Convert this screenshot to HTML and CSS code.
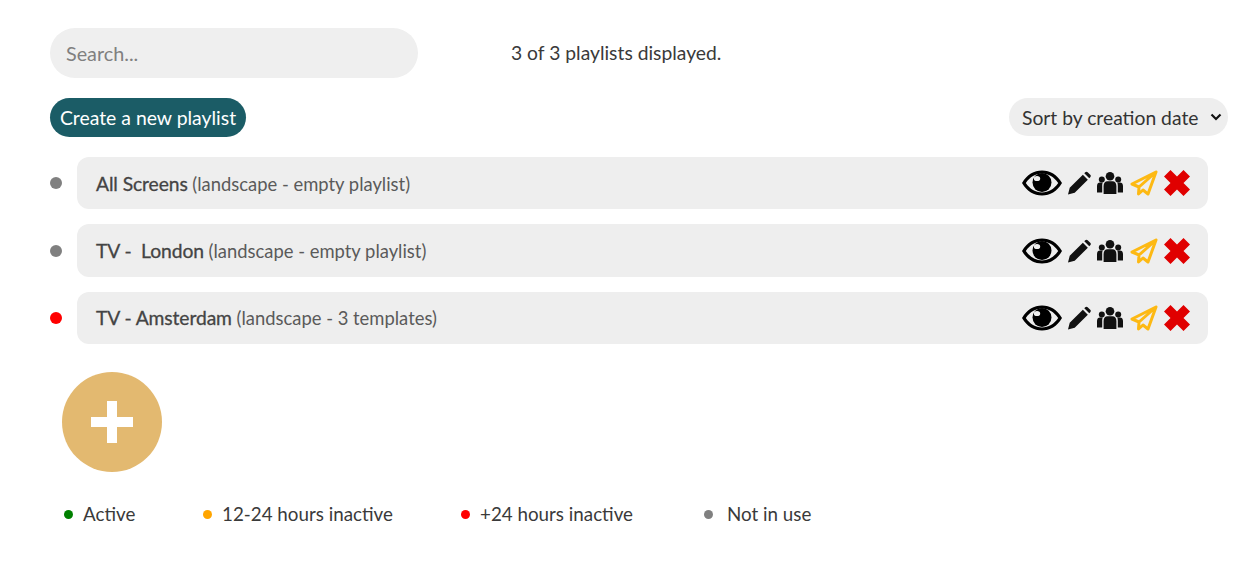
FILE: index.html
```html
<!DOCTYPE html>
<html lang="en">
<head>
<meta charset="utf-8">
<title>Playlists</title>
<link rel="stylesheet" href="styles.css">
</head>
<body>
<svg class="defs" width="0" height="0" aria-hidden="true">
  <symbol id="i-eye" viewBox="0 0 40 26">
    <path fill-rule="evenodd" d="M0 13C5 4.500 12 .5 20 .5S35 4.500 40 13c-5 8.500-12 12.500-20 12.500S5 21.500 0 13zm3.800 0C8 19 13.500 22.500 20 22.500S32 19 36.200 13C32 7 26.500 3.500 20 3.500S8 7 3.800 13z"/>
    <circle cx="20" cy="12.500" r="9.500"/>
    <ellipse cx="15" cy="8.500" rx="3.200" ry="2.600" fill="#eee"/>
  </symbol>
  <symbol id="i-pencil" viewBox="0 0 24 24"><path d="M0 24l1.800-7L15.500 3.300l5.200 5.200L7 22.200zM17 1.800l1-1c.8-.8 1.800-.8 2.500 0l2.700 2.700c.8.700.8 1.700 0 2.500l-1 1z"/></symbol>
  <symbol id="i-group" viewBox="0 0 26 22"><circle cx="13" cy="4.300" r="4.300"/><circle cx="4.800" cy="7.500" r="3"/><circle cx="21.200" cy="7.500" r="3"/><path d="M6.600 22V14c0-3 1.500-4.800 3.900-4.800h5c2.400 0 3.900 1.800 3.900 4.800v8zM0 20.500V14c0-2.500 1.300-3.500 3-3.500h2.800C5.300 11.500 5.200 12.500 5.200 14v6.500zM26 20.500V14c0-2.500-1.300-3.500-3-3.500h-2.800c.5 1 .6 2 .6 3.500v6.500z"/></symbol>
  <symbol id="i-plane" viewBox="0 0 28 26"><path fill="none" stroke="currentColor" stroke-width="3" stroke-linejoin="round" d="M26 2L2 14l7 3-.5 7 4.500-4 5 4zM26 2L9 17"/></symbol>
  <symbol id="i-x" viewBox="0 0 26 26"><path d="M6.500 0L13 6.500 19.500 0 26 6.500 19.500 13 26 19.500 19.500 26 13 19.500 6.500 26 0 19.500 6.500 13 0 6.500z"/></symbol>
</svg>
<main class="page">
  <div class="top">
    <input class="search" type="text" placeholder="Search...">
    <p class="count">3 of 3 playlists displayed.</p>
  </div>
  <div class="bar">
    <button class="create" type="button">Create a new playlist</button>
    <select class="sort"><option>Sort by creation date</option></select>
  </div>
  <ul class="list">
    <li class="item">
      <span class="dot dot-grey"></span>
      <div class="card">
        <p class="label"><b class="name">All Screens</b> (landscape - empty playlist)</p>
        <div class="icons">
          <svg class="eye"><use href="#i-eye"/></svg>
          <svg class="pencil"><use href="#i-pencil"/></svg>
          <svg class="group"><use href="#i-group"/></svg>
          <svg class="plane"><use href="#i-plane"/></svg>
          <svg class="x"><use href="#i-x"/></svg>
        </div>
      </div>
    </li>
    <li class="item">
      <span class="dot dot-grey"></span>
      <div class="card">
        <p class="label"><b class="name">TV -&nbsp; London</b> (landscape - empty playlist)</p>
        <div class="icons">
          <svg class="eye"><use href="#i-eye"/></svg>
          <svg class="pencil"><use href="#i-pencil"/></svg>
          <svg class="group"><use href="#i-group"/></svg>
          <svg class="plane"><use href="#i-plane"/></svg>
          <svg class="x"><use href="#i-x"/></svg>
        </div>
      </div>
    </li>
    <li class="item">
      <span class="dot dot-red"></span>
      <div class="card">
        <p class="label"><b class="name">TV - Amsterdam</b> (landscape - 3 templates)</p>
        <div class="icons">
          <svg class="eye"><use href="#i-eye"/></svg>
          <svg class="pencil"><use href="#i-pencil"/></svg>
          <svg class="group"><use href="#i-group"/></svg>
          <svg class="plane"><use href="#i-plane"/></svg>
          <svg class="x"><use href="#i-x"/></svg>
        </div>
      </div>
    </li>
  </ul>
  <button class="add" type="button" aria-label="Add"><span class="plus"></span></button>
  <ul class="legend">
    <li class="key"><span class="mini mini-green"></span>Active</li>
    <li class="key"><span class="mini mini-orange"></span>12-24 hours inactive</li>
    <li class="key"><span class="mini mini-red"></span>+24 hours inactive</li>
    <li class="key"><span class="mini mini-grey"></span>Not in use</li>
  </ul>
</main>
</body>
</html>
```
FILE: styles.css
```css
* { box-sizing: border-box; }
html, body { margin: 0; padding: 0; }
body {
  background: #fff;
  color: #333;
  font-family: "Lato", "Open Sans", sans-serif;
  font-size: 19px;
}
.defs { display: block; height: 0; }
.page { padding: 28px 7px 0 50px; }
.top { display: flex; align-items: center; height: 50px; }
.search {
  width: 368px;
  height: 50px;
  border: 0;
  border-radius: 25px;
  background: #efefef;
  padding: 0 16px;
  font: inherit;
  font-size: 19.800px;
  color: #333;
}
.search::placeholder { color: #808080; opacity: 1; }
.count { margin: 0 0 2px 93px; font-size: 19.300px; color: #3a3a3a; }
.bar { display: flex; justify-content: space-between; align-items: flex-start; margin-top: 20px; }
.create {
  width: 196px;
  height: 39px;
  border: 0;
  border-radius: 20px;
  background: #1b5c66;
  color: #fff;
  font: inherit;
  font-size: 19.400px;
  padding: 0;
}
.sort {
  appearance: none;
  width: 219px;
  height: 38px;
  border: 0;
  border-radius: 19px;
  background-color: #eee;
  background-image: url("data:image/svg+xml,%3Csvg xmlns='http://www.w3.org/2000/svg' width='12' height='8' viewBox='0 0 12 8'%3E%3Cpath d='M1.500 1.500L6 6l4.500-4.500' fill='none' stroke='%23111' stroke-width='2.200'/%3E%3C/svg%3E");
  background-repeat: no-repeat;
  background-position: right 6px center;
  color: #333;
  font: inherit;
  font-size: 19.300px;
  padding: 0 0 0 13px;
}
.list { list-style: none; margin: 20px 0 0; padding: 0; display: flex; flex-direction: column; gap: 15px; }
.item { display: flex; align-items: flex-start; gap: 15px; width: 1158px; }
.dot { flex: none; width: 12px; height: 12px; border-radius: 50%; margin-top: 20.400px; }
.dot-grey { background: #808080; }
.dot-red { background: #f00; }
.card {
  flex: 1;
  height: 52.400px;
  display: flex;
  align-items: center;
  justify-content: space-between;
  padding: 0 18px 0 19px;
  border-radius: 12px;
  background: #eee;
}
.label { margin: 0; font-size: 18.400px; color: #5a5a5a; }
.name { font-size: 19.300px; letter-spacing: -0.100px; font-weight: 400; color: #444; -webkit-text-stroke: 0.300px #444; }
.icons { display: flex; align-items: center; }
.eye { width: 40px; height: 26px; fill: #000; }
.pencil { width: 23px; height: 24px; margin-left: 6px; fill: #111; }
.group { width: 26px; height: 22px; margin-left: 6px; fill: #111; }
.plane { width: 28px; height: 26px; margin-left: 7px; color: #fdb913; }
.x { width: 26px; height: 26px; margin-left: 6px; fill: #e00000; }
.add {
  display: flex;
  align-items: center;
  justify-content: center;
  width: 100px;
  height: 100px;
  margin: 28px 0 0 12px;
  padding: 0;
  border: 0;
  border-radius: 50%;
  background: #e3b970;
}
.plus {
  display: block;
  width: 42px;
  height: 42px;
  background:
    linear-gradient(#fff, #fff) center / 42px 10px no-repeat,
    linear-gradient(#fff, #fff) center / 10px 42px no-repeat;
}
.legend {
  list-style: none;
  display: grid;
  grid-template-columns: 139px 258px 243px auto;
  margin: 29px 0 0 14px;
  padding: 0;
  font-size: 18.800px;
  color: #3a3a3a;
}
.key { display: flex; align-items: center; height: 24px; }
.mini { width: 9px; height: 9px; border-radius: 50%; margin: 2px 10px 0 0; }
.mini-green { background: #008000; }
.mini-orange { background: #ffa500; }
.mini-red { background: #f00; }
.mini-grey { background: #808080; margin-right: 14px; }
```
